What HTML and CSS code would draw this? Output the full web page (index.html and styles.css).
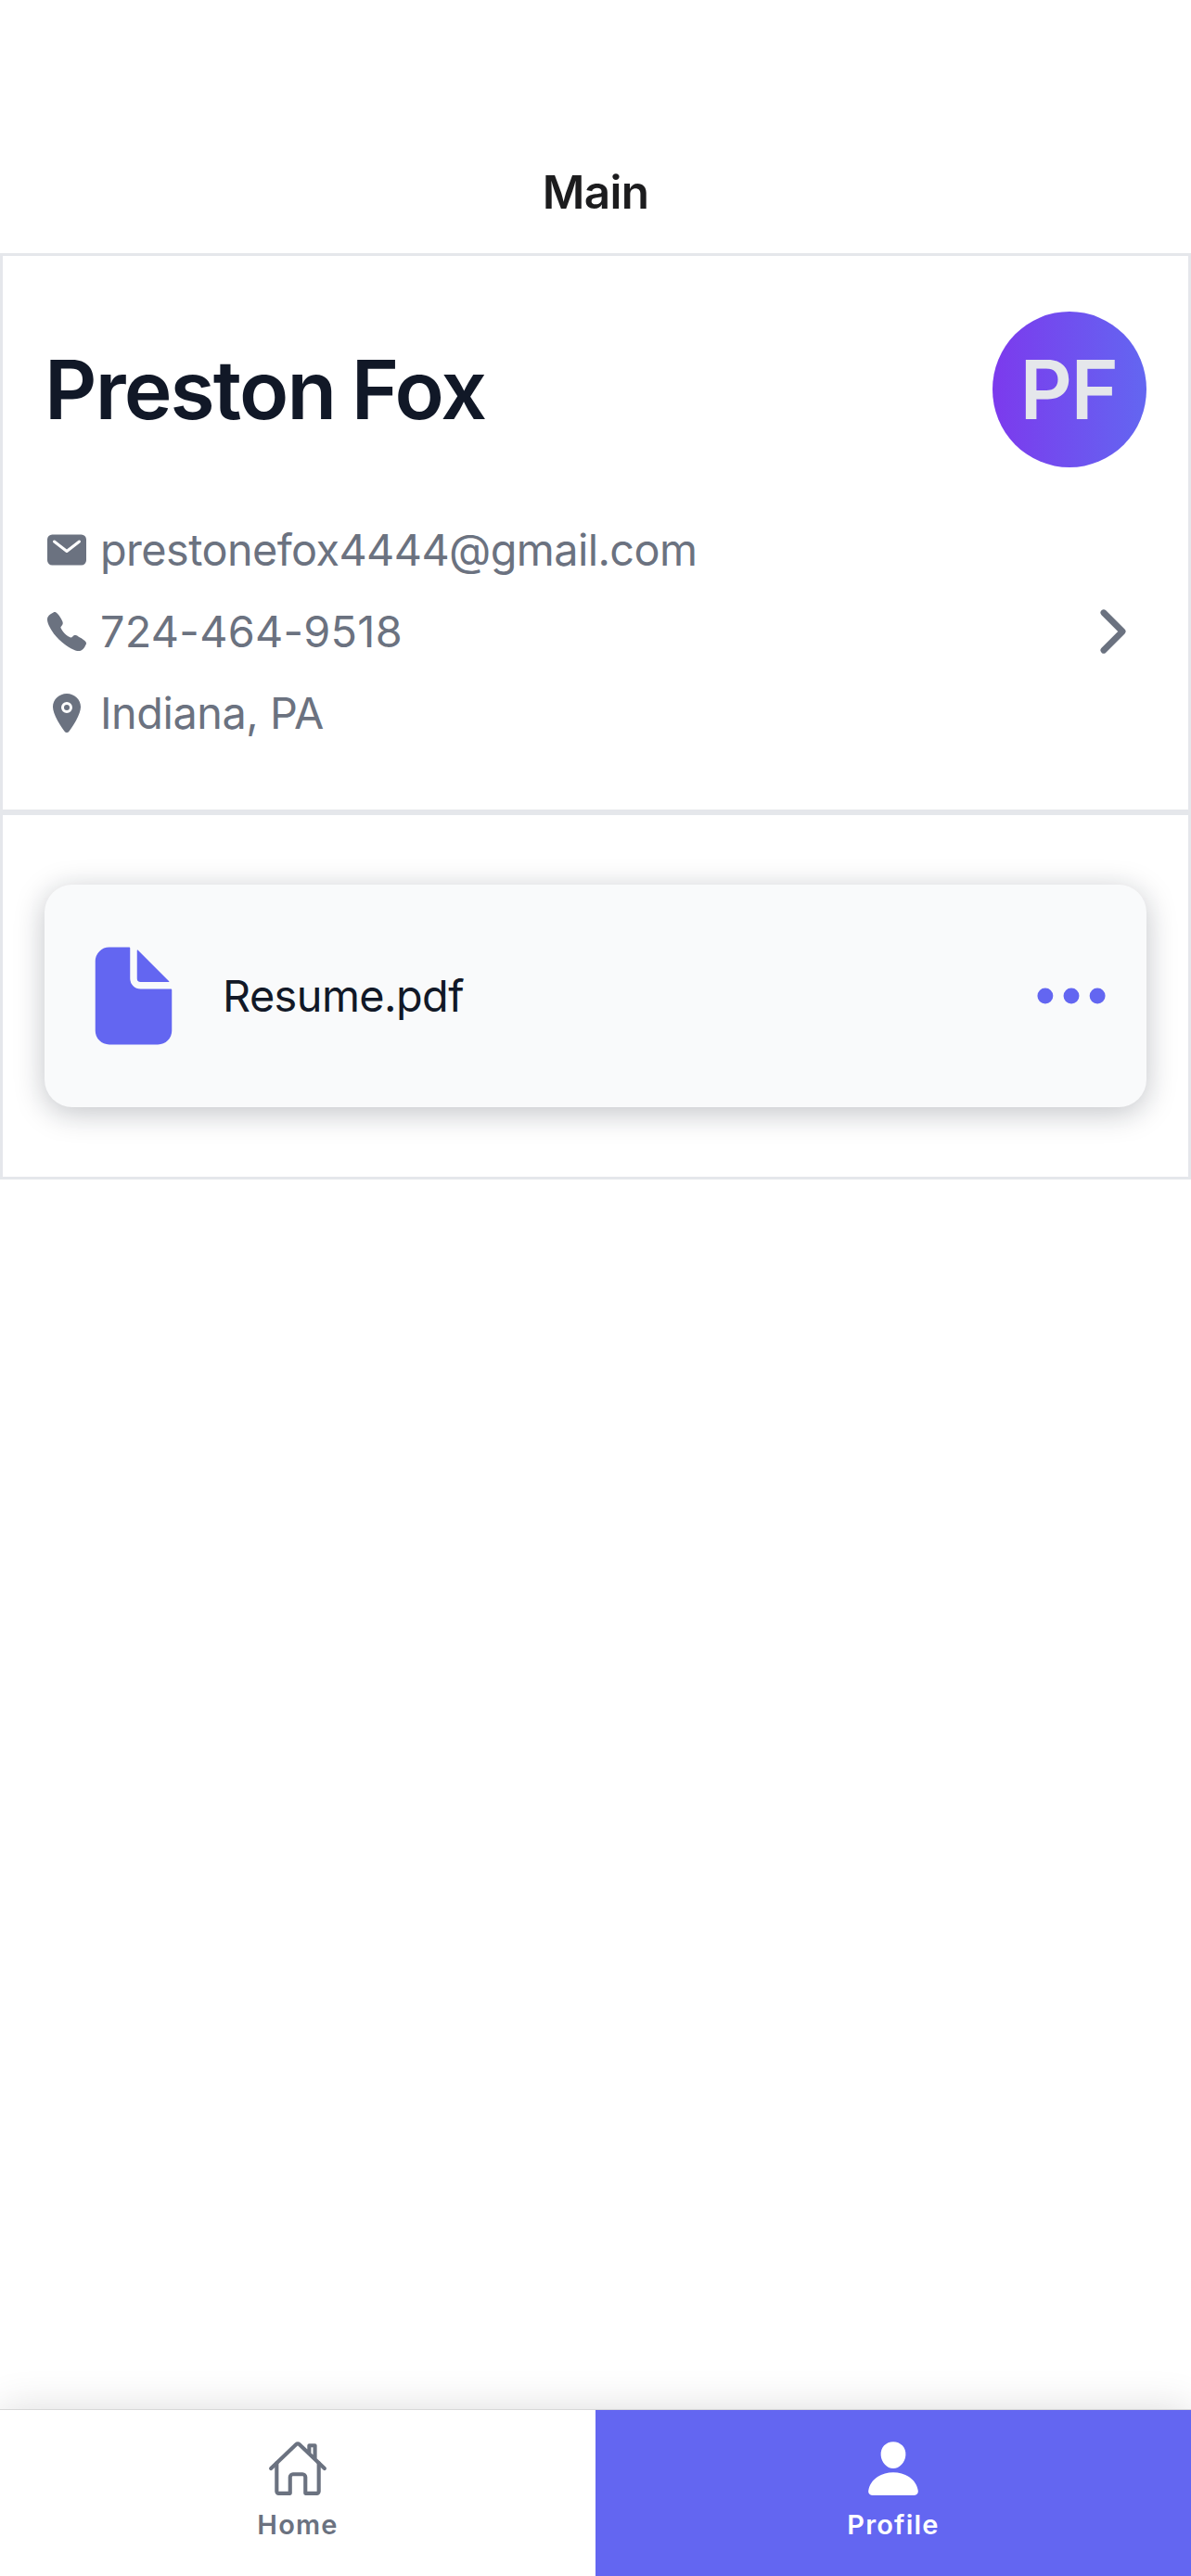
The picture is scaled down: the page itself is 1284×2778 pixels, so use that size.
FILE: index.html
```html
<!DOCTYPE html>
<html lang="en">
<head>
<meta charset="utf-8">
<title>Main</title>
<link rel="stylesheet" href="styles.css">
</head>
<body>
<div class="screen">
  <header class="header"><h1 class="header-title">Main</h1></header>
  <main class="content">
    <section class="section profile">
      <div class="profile-top">
        <h2 class="name">Preston Fox</h2>
        <div class="avatar">PF</div>
      </div>
      <div class="profile-details">
        <ul class="contacts">
          <li class="contact">
            <svg class="contact-icon" viewBox="0 0 512 512"><path d="M424 80H88a56.06 56.06 0 00-56 56v240a56.06 56.06 0 0056 56h336a56.06 56.06 0 0056-56V136a56.06 56.06 0 00-56-56zm-14.18 92.63l-144 112a16 16 0 01-19.64 0l-144-112a16 16 0 1119.64-25.26L256 251.73l134.18-104.36a16 16 0 0119.64 25.26z"/></svg>
            <span class="contact-text">prestonefox4444@gmail.com</span>
          </li>
          <li class="contact">
            <svg class="contact-icon" viewBox="0 0 512 512"><path d="M391 480c-19.52 0-46.94-7.06-88-30-49.93-28-88.55-53.85-138.21-103.38C116.91 298.77 93.61 267.79 61 208.45c-36.84-67-30.56-102.12-23.54-117.13C45.82 73.38 58.16 62.65 74.11 52a176.3 176.3 0 0128.64-15.2c1-.43 1.93-.84 2.76-1.21 4.95-2.23 12.45-5.6 21.95-2 6.34 2.38 12 7.25 20.86 16 18.17 17.92 43 57.83 52.16 77.43 6.15 13.21 10.22 21.93 10.23 31.71 0 11.45-5.76 20.28-12.75 29.81-1.31 1.79-2.61 3.5-3.87 5.16-7.61 10-9.28 12.89-8.18 18.05 2.23 10.37 18.86 41.24 46.19 68.51s57.31 42.85 67.72 45.07c5.38 1.15 8.33-.59 18.65-8.47 1.48-1.13 3-2.3 4.59-3.47 10.66-7.93 19.08-13.54 30.26-13.54h.06c9.73 0 18.06 4.22 31.86 11.18 18 9.08 59.11 33.59 77.14 51.78 8.77 8.84 13.66 14.48 16.05 20.81 3.6 9.53.21 17-2 22-.37.83-.78 1.74-1.21 2.75a176.49 176.49 0 01-15.29 28.58c-10.63 15.9-21.4 28.21-39.38 36.58A67.42 67.42 0 01391 480z"/></svg>
            <span class="contact-text phone">724-464-9518</span>
          </li>
          <li class="contact">
            <svg class="contact-icon" viewBox="0 0 512 512"><circle cx="256" cy="192" r="32"/><path d="M256 32c-88.22 0-160 68.65-160 153 0 40.17 18.31 93.59 54.42 158.78 29 52.34 62.55 99.67 80 123.22a31.75 31.75 0 0051.22 0c17.42-23.55 51-70.88 80-123.22C397.69 278.61 416 225.19 416 185c0-84.35-71.78-153-160-153zm0 224a64 64 0 1164-64 64.07 64.07 0 01-64 64z"/></svg>
            <span class="contact-text place">Indiana, PA</span>
          </li>
        </ul>
        <svg class="chevron" viewBox="0 0 512 512"><path d="M184 112l144 144-144 144"/></svg>
      </div>
    </section>
    <section class="section files">
      <div class="file-card">
        <svg class="file-icon" viewBox="0 0 512 512"><path d="M428 224H288a48 48 0 01-48-48V36a4 4 0 00-4-4h-92a64 64 0 00-64 64v320a64 64 0 0064 64h224a64 64 0 0064-64V228a4 4 0 00-4-4z"/><path d="M419.22 188.59L275.41 44.78a2 2 0 00-3.41 1.41V176a16 16 0 0016 16h129.81a2 2 0 001.41-3.41z"/></svg>
        <span class="file-name">Resume.pdf</span>
        <svg class="more-icon" viewBox="0 0 512 512"><circle cx="96" cy="256" r="48"/><circle cx="256" cy="256" r="48"/><circle cx="416" cy="256" r="48"/></svg>
      </div>
    </section>
  </main>
  <nav class="tabs">
    <a class="tab">
      <svg class="tab-icon outline" viewBox="0 0 512 512"><path d="M80 212v236a16 16 0 0016 16h96V328a24 24 0 0124-24h80a24 24 0 0124 24v136h96a16 16 0 0016-16V212"/><path d="M480 256L266.89 52c-5-5.28-16.69-5.34-21.78 0L32 256M400 179V64h-48v69"/></svg>
      <span class="tab-label">Home</span>
    </a>
    <a class="tab active">
      <svg class="tab-icon" viewBox="0 0 512 512"><path d="M332.64 64.58C313.18 43.57 286 32 256 32c-30.16 0-57.43 11.5-76.8 32.38-19.58 21.11-29.12 49.8-26.88 80.78C156.76 206.28 203.27 256 256 256s99.16-49.71 103.67-110.82c2.27-30.7-7.33-59.33-27.03-80.6zM432 480H80a31 31 0 01-24.2-11.13c-6.5-7.77-9.12-18.38-7.18-29.11C57.06 392.94 83.4 353.61 124.8 326c36.78-24.51 83.37-38 131.2-38s94.42 13.5 131.2 38c41.4 27.6 67.74 66.93 76.18 113.75 1.94 10.73-.68 21.34-7.18 29.11A31 31 0 01432 480z"/></svg>
      <span class="tab-label">Profile</span>
    </a>
  </nav>
</div>
</body>
</html>
```
FILE: styles.css
```css
* {
  box-sizing: border-box;
}

body {
  margin: 0;
  background: #fff;
  font-family: Inter, "Liberation Sans", sans-serif;
}

svg {
  display: block;
  flex: none;
  fill: currentColor;
}

.screen {
  display: flex;
  flex-direction: column;
  width: 1284px;
  height: 2778px;
  overflow: hidden;
}

.header {
  display: flex;
  align-items: center;
  justify-content: center;
  height: 273px;
  padding-top: 141px;
}

.header-title {
  margin: 0;
  color: #1c1c1e;
  font-size: 49.5px;
  font-weight: 600;
  line-height: 60px;
  letter-spacing: -0.7px;
}

.content {
  flex: 1;
}

.section {
  border: 3px solid #e5e7eb;
}

.profile {
  height: 603px;
  padding: 60px 45px 0;
}

.profile-top,
.profile-details {
  display: flex;
  align-items: center;
  justify-content: space-between;
}

.name {
  margin: 0;
  color: #111827;
  font-size: 87.6px;
  font-weight: 600;
  line-height: 108px;
  letter-spacing: -1.85px;
  word-spacing: -2.8px;
}

.avatar {
  display: flex;
  align-items: center;
  justify-content: center;
  width: 166px;
  height: 168px;
  padding-right: 2px;
  border-radius: 50%;
  background: linear-gradient(90deg, #7c3aed, #6366f1);
  color: #e5e7eb;
  font-size: 87.6px;
  font-weight: 600;
  line-height: 108px;
  letter-spacing: -1.5px;
}

.profile-details {
  margin-top: 59px;
  color: #6b7280;
}

.contacts {
  display: flex;
  flex-direction: column;
  gap: 28px;
  margin: 0;
  padding: 0;
  list-style: none;
}

.contact {
  display: flex;
  align-items: center;
  gap: 12px;
  font-size: 46.8px;
  line-height: 60px;
  letter-spacing: -0.58px;
}

.phone {
  letter-spacing: 0.28px;
}

.place {
  letter-spacing: -0.45px;
}

.contact-icon {
  width: 48px;
  height: 48px;
}

.chevron {
  width: 72px;
  height: 72px;
  fill: none;
  stroke: currentColor;
  stroke-width: 48;
  stroke-linecap: round;
  stroke-linejoin: round;
}

.files {
  padding: 75px 45px;
}

.file-card {
  display: flex;
  align-items: center;
  height: 240px;
  padding: 0 36px;
  border-radius: 30px;
  background: #f9fafb;
  box-shadow: 0 6px 32px rgba(17, 24, 39, 0.26);
  color: #6366f1;
}

.file-icon {
  width: 120px;
  height: 120px;
}

.file-name {
  flex: 1;
  margin-left: 36px;
  color: #111827;
  font-size: 46.8px;
  line-height: 60px;
  letter-spacing: -0.55px;
}

.more-icon {
  width: 90px;
  height: 90px;
}

.tabs {
  display: flex;
  height: 180px;
  border-top: 1px solid #d8d8d8;
  background: #fff;
  box-shadow: 0 0 42px rgba(0, 0, 0, 0.14);
}

.tab {
  display: flex;
  flex: 1;
  flex-direction: column;
  align-items: center;
  gap: 10px;
  padding-top: 30px;
  color: #6b7280;
}

.tab.active {
  background: #6366f1;
  color: #fff;
}

.tab-icon {
  width: 66px;
  height: 66px;
}

.outline {
  fill: none;
  stroke: currentColor;
  stroke-width: 32;
  stroke-linecap: round;
  stroke-linejoin: round;
}

.tab-label {
  font-size: 29px;
  font-weight: 600;
  line-height: 36px;
  letter-spacing: 1.2px;
}
```
